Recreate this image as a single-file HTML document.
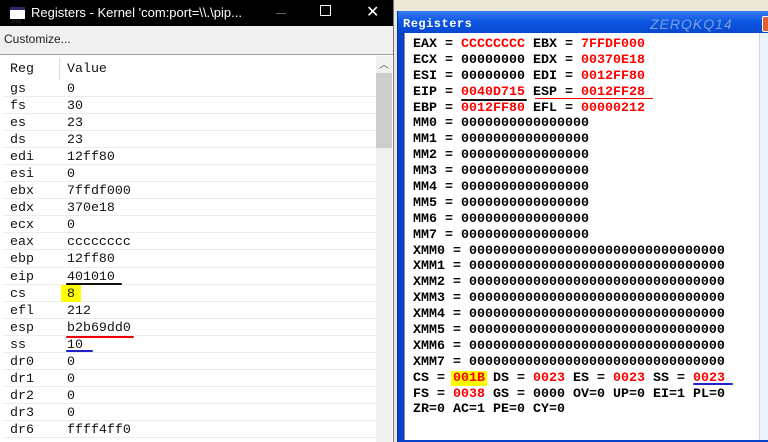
<!DOCTYPE html>
<html><head><meta charset="utf-8"><style>
*{margin:0;padding:0;box-sizing:border-box}
body{width:768px;height:442px;overflow:hidden;background:#ece9d8;position:relative;font-family:"Liberation Sans",sans-serif}
#L{position:absolute;left:0;top:0;width:394px;height:442px;background:#fff;border-right:1px solid #777}
#Lt{height:26px;background:#000;color:#fff;font-size:13px;line-height:26px;padding-left:31px;position:relative}
#Lt .ic{position:absolute;left:10px;top:7px;width:15px;height:12px;background:#fff;border-top:3px solid #2a2a6a}
#Lt .ic:after{content:"reg";position:absolute;left:2px;top:-1px;font-size:6px;color:#333}
#Lt .mn{position:absolute;left:276px;top:13px;width:10px;height:1px;background:#666}
#Lt .mx{position:absolute;left:320px;top:5px;width:11px;height:11px;border:1px solid #fff}
#Lt .cl{position:absolute;left:366px;top:0;font-size:16px}
#Lb{height:29px;background:#f0f0f0;border-bottom:1px solid #a0a0a0;font-size:12px;line-height:27px;padding-left:4px;color:#222}
#Lg{position:absolute;left:3px;top:56px;width:373px;font-family:"Liberation Mono",monospace;font-size:13.3px;color:#111}
.r{height:17.05px;line-height:17px;border-bottom:1px solid #ececec;position:relative;white-space:pre}
.r span{position:absolute;left:7px}.r b{position:absolute;left:64px;font-weight:normal}
.h{height:24px;line-height:26px;border:none}
.h:after{content:"";position:absolute;left:56px;top:2px;width:1px;height:22px;background:#ddd}
#Ls{position:absolute;left:376px;top:56px;width:16px;height:386px;background:#f0f0f0}
#Ls .th{position:absolute;left:0;top:17px;width:16px;height:75px;background:#cdcdcd}
#Ls .ar{position:absolute;left:3px;top:0;font-size:10px;color:#555}
#R{position:absolute;left:397px;top:11px;width:371px;height:431px;background:#0842c8;border-left:1px solid #0030a0}
#Rt{height:22px;background:linear-gradient(#3a7cf0,#0a55e0 50%,#0848d0);color:#fff;font:bold 12px "Liberation Mono",monospace;line-height:26px;padding-left:5px;position:relative;letter-spacing:.5px}
#Rt i{position:absolute;left:252px;top:0;font:italic 14px "Liberation Sans",sans-serif;color:#7aa0e0;letter-spacing:1px;line-height:26px}
#Rt .x{position:absolute;right:-6px;top:5px;width:12px;height:16px;background:#e06030;border:1px solid #fff;border-radius:2px}
#Rc{position:absolute;left:6px;top:22px;width:355px;height:407px;background:#fff;border-left:1px solid #888;font:bold 13.33px "Liberation Mono",monospace;color:#000;padding:4px 0 0 8px}
#Rc div{height:15.9px;line-height:16px;white-space:pre}
.red{color:#f00}
.hl{background:#ff0;padding:0 2px;margin:0 -2px}
#Rs{position:absolute;left:361px;top:22px;width:10px;height:407px;background:#eef2fb;border-left:1px solid #c8d4ee}
.ul{position:absolute;height:2px;border-radius:1px}
</style></head><body>
<div id="L">
<div id="Lt"><div class="ic"></div>Registers - Kernel 'com:port=\\.\pip...<div class="mn"></div><div class="mx"></div><div class="cl">✕</div></div>
<div id="Lb">Customize...</div>
<div id="Lg">
<div class="r h"><span>Reg</span><b>Value</b></div>
<div class="r"><span>gs</span><b>0</b></div>
<div class="r"><span>fs</span><b>30</b></div>
<div class="r"><span>es</span><b>23</b></div>
<div class="r"><span>ds</span><b>23</b></div>
<div class="r"><span>edi</span><b>12ff80</b></div>
<div class="r"><span>esi</span><b>0</b></div>
<div class="r"><span>ebx</span><b>7ffdf000</b></div>
<div class="r"><span>edx</span><b>370e18</b></div>
<div class="r"><span>ecx</span><b>0</b></div>
<div class="r"><span>eax</span><b>cccccccc</b></div>
<div class="r"><span>ebp</span><b>12ff80</b></div>
<div class="r"><span>eip</span><b>401010</b></div>
<div class="r"><span>cs</span><b style="background:#ff0;left:58px;padding:0 6px">8</b></div>
<div class="r"><span>efl</span><b>212</b></div>
<div class="r"><span>esp</span><b>b2b69dd0</b></div>
<div class="r"><span>ss</span><b>10</b></div>
<div class="r"><span>dr0</span><b>0</b></div>
<div class="r"><span>dr1</span><b>0</b></div>
<div class="r"><span>dr2</span><b>0</b></div>
<div class="r"><span>dr3</span><b>0</b></div>
<div class="r"><span>dr6</span><b>ffff4ff0</b></div>
</div>
<div class="ul" style="left:66px;top:283px;width:56px;background:#111"></div>
<div class="ul" style="left:66px;top:336px;width:68px;background:#e00"></div>
<div class="ul" style="left:66px;top:350px;width:27px;background:#22c"></div>
<div id="Ls"><div class="ar">︿</div><div class="th"></div></div>
</div>
<div id="R">
<div id="Rt">Registers<i>ZERQKQ14</i><div class="x"></div></div>
<div id="Rc">
<div>EAX = <span class="red">CCCCCCCC</span> EBX = <span class="red">7FFDF000</span></div>
<div>ECX = 00000000 EDX = <span class="red">00370E18</span></div>
<div>ESI = 00000000 EDI = <span class="red">0012FF80</span></div>
<div>EIP = <span class="red">0040D715</span> ESP = <span class="red">0012FF28</span></div>
<div>EBP = <span class="red">0012FF80</span> EFL = <span class="red">00000212</span></div>
<div>MM0 = 0000000000000000</div>
<div>MM1 = 0000000000000000</div>
<div>MM2 = 0000000000000000</div>
<div>MM3 = 0000000000000000</div>
<div>MM4 = 0000000000000000</div>
<div>MM5 = 0000000000000000</div>
<div>MM6 = 0000000000000000</div>
<div>MM7 = 0000000000000000</div>
<div>XMM0 = 00000000000000000000000000000000</div>
<div>XMM1 = 00000000000000000000000000000000</div>
<div>XMM2 = 00000000000000000000000000000000</div>
<div>XMM3 = 00000000000000000000000000000000</div>
<div>XMM4 = 00000000000000000000000000000000</div>
<div>XMM5 = 00000000000000000000000000000000</div>
<div>XMM6 = 00000000000000000000000000000000</div>
<div>XMM7 = 00000000000000000000000000000000</div>
<div>CS = <span class="red hl">001B</span> DS = <span class="red">0023</span> ES = <span class="red">0023</span> SS = <span class="red">0023</span></div>
<div>FS = <span class="red">0038</span> GS = 0000 OV=0 UP=0 EI=1 PL=0</div>
<div>ZR=0 AC=1 PE=0 CY=0</div>
</div>
<div id="Rs"></div>
</div>
<div class="ul" style="left:461px;top:99px;width:66px;background:#111;height:2px"></div>
<div class="ul" style="left:535px;top:98px;width:118px;background:#e00;height:1px"></div>
<div class="ul" style="left:693px;top:383px;width:40px;background:#22c"></div>
</body></html>
